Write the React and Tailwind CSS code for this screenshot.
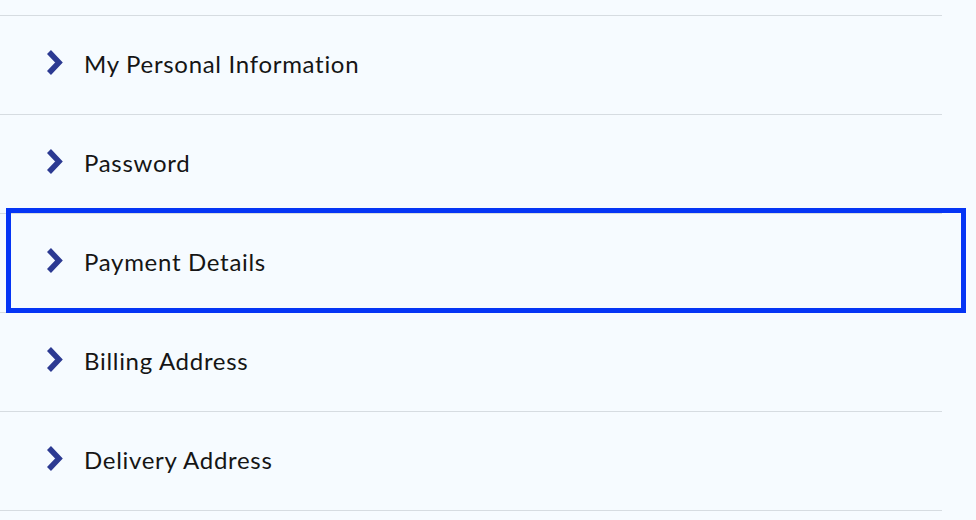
import React from 'react';

const items = [
  'My Personal Information',
  'Password',
  'Payment Details',
  'Billing Address',
  'Delivery Address',
];

// 粗体右箭头
const Chevron = () => (
  <svg width="17" height="25" viewBox="0 0 17 25" className="shrink-0 -mt-[6px]">
    <polyline
      points="2,2 12,12.5 2,23"
      fill="none"
      stroke="#2c3a92"
      strokeWidth="5.5"
      strokeLinejoin="miter"
      strokeLinecap="butt"
    />
  </svg>
);

const App = () => {
  const focused = 2;

  return (
    <div
      className="min-h-[520px] w-full bg-[#f6fbff] pt-[15px] overflow-hidden"
      style={{ fontFamily: 'Lato, "Noto Sans", sans-serif' }}
    >
      <ul className="w-[942px] border-t border-[#d6dce1]">
        {items.map((label, index) => (
          <li
            key={label}
            className="relative flex h-[99px] items-center border-b border-[#d6dce1] pl-[47px]"
          >
            <Chevron />
            <span className="ml-[20px] -mt-[3px] text-[24px] leading-none tracking-[0.7px] text-[#151515]">
              {label}
            </span>
            {index === focused && (
              <div className="pointer-events-none absolute left-[6px] top-[-6px] h-[105px] w-[960px] border-[5px] border-[#0535f5]" />
            )}
          </li>
        ))}
      </ul>
    </div>
  );
};

export default App;
